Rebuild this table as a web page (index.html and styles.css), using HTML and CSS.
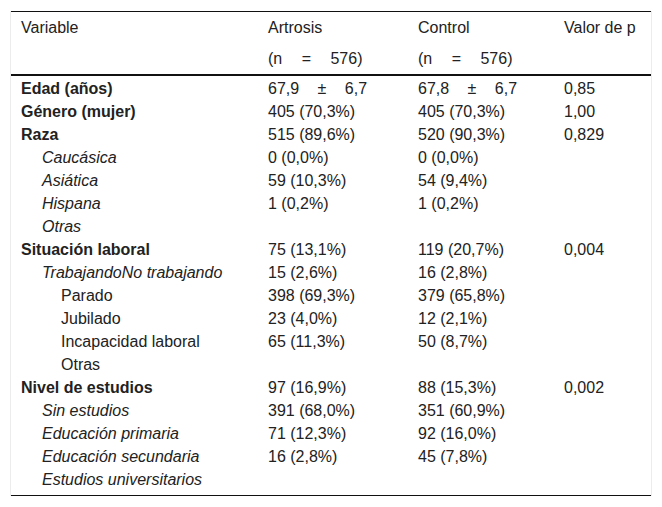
FILE: index.html
```html
<!DOCTYPE html>
<html lang="es">
<head>
<meta charset="utf-8">
<title>Tabla</title>
<link rel="stylesheet" href="styles.css">
</head>
<body>
<div class="wrap">
<table class="tbl">
<colgroup>
<col class="c1"><col class="c2"><col class="c3"><col class="c4">
</colgroup>
<thead>
<tr class="h1"><th>Variable</th><th>Artrosis</th><th>Control</th><th>Valor de p</th></tr>
<tr class="h2"><th></th><th><span class="sn">(n = 576)</span></th><th><span class="sn">(n = 576)</span></th><th></th></tr>
</thead>
<tbody>
<tr><td class="b">Edad (años)</td><td><span class="sp">67,9 ± 6,7</span></td><td><span class="sp">67,8 ± 6,7</span></td><td>0,85</td></tr>
<tr><td class="b">Género (mujer)</td><td>405 (70,3%)</td><td>405 (70,3%)</td><td>1,00</td></tr>
<tr><td class="b">Raza</td><td>515 (89,6%)</td><td>520 (90,3%)</td><td>0,829</td></tr>
<tr><td class="i1">Caucásica</td><td>0 (0,0%)</td><td>0 (0,0%)</td><td></td></tr>
<tr><td class="i1">Asiática</td><td>59 (10,3%)</td><td>54 (9,4%)</td><td></td></tr>
<tr><td class="i1">Hispana</td><td>1 (0,2%)</td><td>1 (0,2%)</td><td></td></tr>
<tr><td class="i1">Otras</td><td></td><td></td><td></td></tr>
<tr><td class="b">Situación laboral</td><td>75 (13,1%)</td><td>119 (20,7%)</td><td>0,004</td></tr>
<tr><td class="i1">TrabajandoNo trabajando</td><td>15 (2,6%)</td><td>16 (2,8%)</td><td></td></tr>
<tr><td class="i2">Parado</td><td>398 (69,3%)</td><td>379 (65,8%)</td><td></td></tr>
<tr><td class="i2">Jubilado</td><td>23 (4,0%)</td><td>12 (2,1%)</td><td></td></tr>
<tr><td class="i2">Incapacidad laboral</td><td>65 (11,3%)</td><td>50 (8,7%)</td><td></td></tr>
<tr><td class="i2">Otras</td><td></td><td></td><td></td></tr>
<tr><td class="b">Nivel de estudios</td><td>97 (16,9%)</td><td>88 (15,3%)</td><td>0,002</td></tr>
<tr><td class="i1">Sin estudios</td><td>391 (68,0%)</td><td>351 (60,9%)</td><td></td></tr>
<tr><td class="i1">Educación primaria</td><td>71 (12,3%)</td><td>92 (16,0%)</td><td></td></tr>
<tr><td class="i1">Educación secundaria</td><td>16 (2,8%)</td><td>45 (7,8%)</td><td></td></tr>
<tr><td class="i1">Estudios universitarios</td><td></td><td></td><td></td></tr>
</tbody>
</table>
</div>
</body>
</html>
```

FILE: styles.css
```css
html, body {
  margin: 0;
  padding: 0;
  background: #ffffff;
}
body {
  font-family: "Liberation Sans", Arial, sans-serif;
  font-size: 16px;
  color: #222222;
}
.wrap {
  margin: 11px 0 0 10px;
  width: 640px;
  border-left: 1px solid #ececec;
  border-right: 1px solid #ececec;
}
.tbl {
  width: 640px;
  border-collapse: collapse;
  table-layout: fixed;
  border-top: 1px solid #111111;
  border-bottom: 1px solid #111111;
}
.c1 { width: 247px; }
.c2 { width: 150px; }
.c3 { width: 146px; }
.c4 { width: 97px; }
.tbl th {
  font-weight: normal;
  text-align: left;
  padding: 0 0 0 10px;
  vertical-align: middle;
  white-space: nowrap;
}
.h1 th { height: 31px; }
.h2 th {
  height: 31px;
  border-bottom: 2px solid #111111;
}
.tbl td {
  padding: 0 0 0 10px;
  height: 23px;
  line-height: 17px;
  vertical-align: middle;
  white-space: nowrap;
}
.tbl tbody tr:first-child td { padding-top: 1px; }
.tbl tbody tr:last-child td { padding-bottom: 4px; }
.b { font-weight: bold; }
.tbl td.i1 { padding-left: 31px; font-style: italic; }
.tbl td.i2 { padding-left: 50px; }
.sn { word-spacing: 15px; }
.sp { word-spacing: 14px; }
```
